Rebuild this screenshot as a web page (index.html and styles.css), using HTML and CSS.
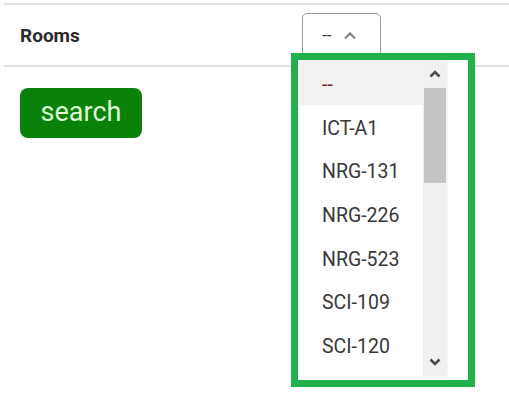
FILE: index.html
```html
<!DOCTYPE html>
<html lang="en">
  <head>
    <meta charset="UTF-8" />
    <meta name="viewport" content="width=device-width, initial-scale=1.0" />
    <title>Rooms</title>
    <link rel="stylesheet" href="styles.css">
  </head>
  <body>
    <div class="filter-row">
      <div class="filter-label">Rooms</div>
      <div class="select-box">
        <span class="select-value">--</span>
        <svg class="select-caret" width="14" height="9" viewBox="0 0 14 9">
          <path d="M2 7.5 L7 2.5 L12 7.5" fill="none" stroke="#8a8a8a" stroke-width="2.4" />
        </svg>
      </div>
    </div>

    <button class="search-btn">search</button>

    <div class="highlight">
      <div class="dropdown">
        <ul class="options">
          <li class="option selected">--</li>
          <li class="option">ICT-A1</li>
          <li class="option">NRG-131</li>
          <li class="option">NRG-226</li>
          <li class="option">NRG-523</li>
          <li class="option">SCI-109</li>
          <li class="option">SCI-120</li>
        </ul>
        <div class="scrollbar">
          <svg class="arrow" width="12" height="8" viewBox="0 0 12 8">
            <path d="M1.5 6.5 L6 2 L10.5 6.5" fill="none" stroke="#4a4a4a" stroke-width="2.6" />
          </svg>
          <div class="thumb"></div>
          <div class="track-rest"></div>
          <svg class="arrow" width="12" height="8" viewBox="0 0 12 8">
            <path d="M1.5 1.5 L6 6 L10.5 1.5" fill="none" stroke="#4a4a4a" stroke-width="2.6" />
          </svg>
        </div>
      </div>
    </div>
  </body>
</html>
```

FILE: styles.css
```css
html,
body {
  min-height: 395px;
}
body {
  margin: 0;
  font-family: Roboto, "Liberation Sans", sans-serif;
  background-color: #fff;
  position: relative;
}

.filter-row {
  margin: 3px 0 0 4px;
  height: 60px;
  border-top: 2px solid #e2e2e2;
  border-bottom: 2px solid #e2e2e2;
  display: flex;
  align-items: center;
}
.filter-label {
  width: 282px;
  padding-left: 16px;
  font-size: 19px;
  font-weight: bold;
  color: #2a2a2a;
}
.select-box {
  width: 79px;
  height: 44px;
  border: 1px solid #9a9a9a;
  border-radius: 5px;
  display: flex;
  align-items: center;
  gap: 12px;
  padding-left: 19px;
  box-sizing: border-box;
}
.select-value {
  font-size: 17px;
  color: #333;
}

.search-btn {
  margin: 21px 0 0 20px;
  width: 122px;
  height: 50px;
  border: none;
  border-radius: 8px;
  background-color: #0a820a;
  color: #dcffd4;
  font-family: Roboto, "Liberation Sans", sans-serif;
  font-size: 27px;
  padding: 0 0 3px;
}

.highlight {
  position: absolute;
  left: 291px;
  top: 53px;
  width: 170px;
  height: 320px;
  border: 7px solid #22b04a;
  background-color: #fff;
}
.dropdown {
  margin: 1px 0 0 2px;
  width: 147px;
  height: 315px;
  display: flex;
  overflow: hidden;
  box-shadow: 0 0 2px rgba(0, 0, 0, 0.12);
}
.options {
  list-style: none;
  margin: 0;
  padding: 0;
  flex: 1;
}
.option {
  height: 43.7px;
  box-sizing: border-box;
  padding: 3px 0 0 22px;
  display: flex;
  align-items: center;
  font-size: 19.5px;
  color: #383838;
}
.option.selected {
  background-color: #f2f2f2;
  color: #6a2a2a;
}
.scrollbar {
  width: 24px;
  background-color: #f1f1f1;
  display: flex;
  flex-direction: column;
  align-items: center;
}
.arrow {
  margin: 9px 0 10px;
  flex-shrink: 0;
}
.thumb {
  width: 22px;
  height: 95px;
  background-color: #c4c4c4;
  flex-shrink: 0;
}
.track-rest {
  flex: 1;
}
```
